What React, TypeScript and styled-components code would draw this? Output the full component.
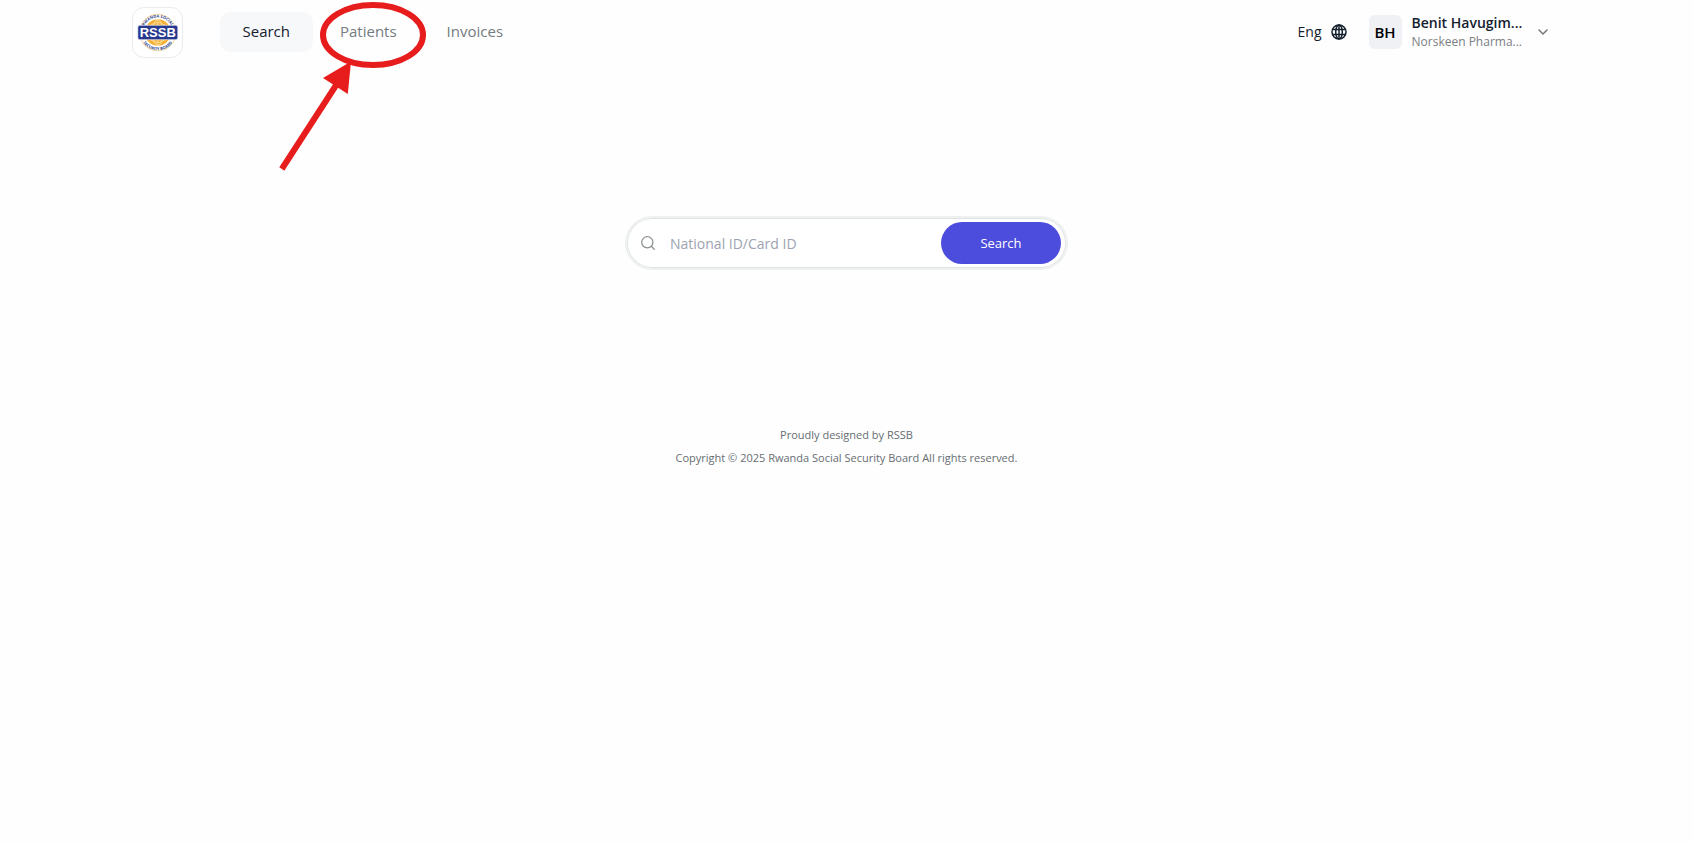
import React from 'react';
import styled, { createGlobalStyle } from 'styled-components';

const GlobalStyle = createGlobalStyle`
  *, *::before, *::after { box-sizing: border-box; }
  body {
    margin: 0;
    background: #fefefe;
    color: #14202e;
    font-family: "Open Sans", "Noto Sans", sans-serif;
  }
  button, input { font: inherit; }
`;

const Header = styled.header`
  display: flex;
  align-items: center;
  justify-content: space-between;
  max-width: 1430px;
  height: 64px;
  margin: 0 auto;
  padding-right: 12px;
`;

const Group = styled.div<{ $gap: number }>`
  display: flex;
  align-items: center;
  gap: ${(p) => p.$gap}px;
`;

const LogoLink = styled.a`
  display: block;
  width: 51px;
  height: 51px;
  border: 1px solid #e9ebed;
  border-radius: 12px;
  background: #fff;
  overflow: hidden;

  svg { display: block; }
`;

const Nav = styled.nav`
  position: relative;
  display: flex;
  gap: 4px;
`;

const NavLink = styled.a<{ $active?: boolean }>`
  height: 40px;
  padding: 0 23px;
  border-radius: 10px;
  background: ${(p) => (p.$active ? '#f7f8fa' : 'transparent')};
  color: ${(p) => (p.$active ? '#14202e' : '#747b80')};
  font-size: 15px;
  line-height: 38px;
  text-decoration: none;
`;

const Annotation = styled.svg`
  position: absolute;
  top: -12px;
  left: 52px;
  pointer-events: none;
`;

const LanguageButton = styled.button`
  display: flex;
  align-items: center;
  gap: 9px;
  padding: 0;
  border: 0;
  background: none;
  color: #14202e;
  font-size: 14px;
  line-height: 20px;
  cursor: pointer;
`;

const AccountButton = styled.button`
  display: flex;
  align-items: center;
  padding: 0;
  border: 0;
  background: none;
  color: #14202e;
  text-align: left;
  cursor: pointer;
`;

const Avatar = styled.span`
  width: 33px;
  height: 34px;
  margin-right: 10px;
  border-radius: 6px;
  background: #f0f1f4;
  color: #000;
  font-size: 15px;
  font-weight: 600;
  line-height: 35px;
  text-align: center;
`;

const Identity = styled.span`
  display: flex;
  flex-direction: column;
  width: 112px;
  margin-right: 12px;
  white-space: nowrap;
`;

const UserName = styled.span`
  font-size: 14px;
  font-weight: 600;
  line-height: 18px;
`;

const Workplace = styled.span`
  color: #7b8084;
  font-size: 12px;
  line-height: 19px;
`;

const Main = styled.main`
  padding: 152px 16px 0;
`;

const SearchForm = styled.form`
  display: flex;
  align-items: center;
  width: 100%;
  max-width: 443px;
  height: 54px;
  margin: 0 auto;
  padding: 0 5px 0 13px;
  border: 2px solid #eff1f1;
  border-radius: 27px;
  background: #fff;
  box-shadow: inset 0 0 0 1px #dfe3e3;
`;

const SearchInput = styled.input`
  flex: 1;
  min-width: 0;
  height: 42px;
  padding: 0 0 0 14px;
  border: 0;
  outline: 0;
  background: transparent;
  color: #14202e;
  font-size: 14px;

  &::placeholder { color: #9ca3af; opacity: 1; }
`;

const SubmitButton = styled.button`
  width: 120px;
  height: 42px;
  padding: 0;
  border: 0;
  border-radius: 21px;
  background: #4c4ddc;
  color: #fff;
  font-size: 13px;
  cursor: pointer;
`;

const Footer = styled.footer`
  padding: 153px 16px 24px;
  color: #666d71;
  font-size: 11px;
  line-height: 23px;
  text-align: center;

  p { margin: 0; }
`;

function RssbLogo() {
  return (
    <svg width="49" height="49" viewBox="0 0 49 49" role="img" aria-label="RSSB">
      <defs>
        <path id="ring-top" d="M9.800 24.500a15 15 0 0 1 30 0" />
        <path id="ring-bottom" d="M7 24.500a17.800 17.800 0 0 0 35.600 0" />
      </defs>
      <circle cx="24.800" cy="24.500" r="18.300" fill="none" stroke="#f0cd86" strokeWidth=".8" />
      <circle cx="24.800" cy="24.500" r="13.200" fill="#f5b033" />
      <g fill="none" stroke="#fde7b8" strokeWidth=".7">
        <circle cx="24.800" cy="24.500" r="10" />
        <ellipse cx="24.800" cy="24.500" rx="5" ry="13" />
        <path d="M24.800 11v27" />
      </g>
      <g fill="#2a3f8c" fontFamily="Open Sans, sans-serif" fontWeight="700" fontSize="4" textAnchor="middle">
        <text><textPath href="#ring-top" startOffset="50%">RWANDA SOCIAL</textPath></text>
        <text><textPath href="#ring-bottom" startOffset="50%">SECURITY BOARD</textPath></text>
      </g>
      <rect x="4.800" y="17.300" width="40" height="14.400" rx="2" fill="#27388f" stroke="#fff" strokeWidth=".6" />
      <text x="24.800" y="29.200" fill="#fff" fontFamily="Liberation Sans, sans-serif" fontWeight="700" fontSize="13" textAnchor="middle">RSSB</text>
    </svg>
  );
}

function GlobeIcon() {
  return (
    <svg width="16" height="16" viewBox="0 0 16 16" fill="none" stroke="currentColor" strokeWidth="1.500" aria-hidden="true">
      <circle cx="8" cy="8" r="7" />
      <ellipse cx="8" cy="8" rx="3.300" ry="7" />
      <path d="M8 1v14M1.500 5.500h13M1.500 10.500h13" />
    </svg>
  );
}

export default function App() {
  return (
    <>
      <GlobalStyle />
      <Header>
        <Group $gap={37}>
          <LogoLink href="#"><RssbLogo /></LogoLink>
          <Nav>
            <NavLink href="#search" $active>Search</NavLink>
            <NavLink href="#patients">Patients</NavLink>
            <NavLink href="#invoices">Invoices</NavLink>
            <Annotation width="160" height="180" viewBox="272 0 160 180" aria-hidden="true">
              <ellipse cx="373" cy="35" rx="50" ry="30" fill="none" stroke="#e71c1c" strokeWidth="6" />
              <path d="M281.800 169L337.500 83" stroke="#e71c1c" strokeWidth="6" />
              <path d="M351 61.500L323 78L347.800 94Z" fill="#e71c1c" />
            </Annotation>
          </Nav>
        </Group>
        <Group $gap={22}>
          <LanguageButton type="button">
            Eng
            <GlobeIcon />
          </LanguageButton>
          <AccountButton type="button">
            <Avatar>BH</Avatar>
            <Identity>
              <UserName>Benit Havugim...</UserName>
              <Workplace>Norskeen Pharma...</Workplace>
            </Identity>
            <svg width="14" height="14" viewBox="0 0 14 14" fill="none" stroke="#70777b" strokeWidth="1.500" aria-hidden="true">
              <path d="M3 5L7 9L11 5" strokeLinecap="round" strokeLinejoin="round" />
            </svg>
          </AccountButton>
        </Group>
      </Header>
      <Main>
        <SearchForm onSubmit={(e) => e.preventDefault()}>
          <svg width="16" height="16" viewBox="0 0 16 16" fill="none" stroke="#8d9193" strokeWidth="1.300" aria-hidden="true">
            <circle cx="7.300" cy="7.300" r="5.600" />
            <path d="M11.500 11.500L14.200 14.200" strokeLinecap="round" />
          </svg>
          <SearchInput type="text" aria-label="National ID/Card ID" placeholder="National ID/Card ID" />
          <SubmitButton type="submit">Search</SubmitButton>
        </SearchForm>
      </Main>
      <Footer>
        <p>Proudly designed by RSSB</p>
        <p>Copyright © 2025 Rwanda Social Security Board All rights reserved.</p>
      </Footer>
    </>
  );
}
